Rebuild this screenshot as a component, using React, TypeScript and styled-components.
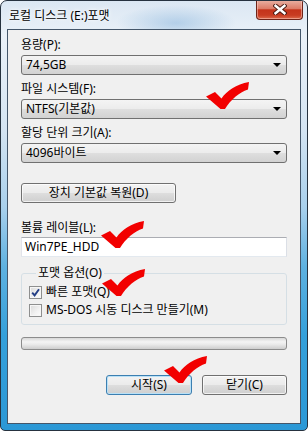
import styled, {createGlobalStyle} from 'styled-components';

const GlobalStyle = createGlobalStyle`
    body {
        margin: 0;
        background: #ffffff;
        font-family: 'Noto Sans', 'Noto Sans CJK KR', sans-serif;
    }
`;

const Window = styled.div`
    position: relative;
    width: 308px;
    height: 431px;
    box-sizing: border-box;
    display: flex;
    flex-direction: column;
    padding: 0 6px 6px 6px;
    border: 1px solid #26323f;
    border-radius: 7px 7px 5px 5px;
    background:
        radial-gradient(ellipse 60px 18px at 175px 22px, rgba(120, 170, 215, 0.45), transparent),
        linear-gradient(180deg, #dbe7f3 0%, #eaf1f8 8%, #d4e4f2 30%, #a9d0ec 48%, #5eb1e0 62%, #35a0da 78%, #2b98d6 100%);
    overflow: hidden;
    font-size: 12px;
    color: #000;
`;

const TitleBar = styled.div`
    height: 28px;
    display: flex;
    align-items: center;
    justify-content: space-between;
    padding-left: 2px;
`;

const Title = styled.span`
    line-height: 14px;
    margin-top: 1px;
    text-shadow: 0 0 6px #ffffff, 0 0 3px #ffffff;
`;

const CloseButton = styled.div`
    align-self: flex-start;
    width: 45px;
    height: 19px;
    margin-top: -1px;
    margin-right: -2px;
    display: flex;
    align-items: center;
    justify-content: center;
    border: 1px solid #6e2419;
    border-top: none;
    border-radius: 0 0 4px 4px;
    background: linear-gradient(180deg, #eab2a5 0%, #dc7c68 45%, #c4331b 52%, #c83c22 80%, #dc6a4c 100%);
    box-shadow: inset 0 0 0 1px rgba(255, 210, 200, 0.5);
`;

const Client = styled.div`
    flex: 1;
    display: flex;
    flex-direction: column;
    padding: 8px 13px 0 13px;
    border: 1px solid #44566a;
    background: #f0f0f0;
`;

const FieldLabel = styled.div<{$top?: number}>`
    line-height: 14px;
    height: 14px;
    margin-top: ${p => p.$top ?? 0}px;
    white-space: nowrap;
`;

const Combo = styled.div`
    height: 20px;
    box-sizing: border-box;
    margin-top: 3px;
    display: flex;
    align-items: center;
    justify-content: space-between;
    padding: 0 5px 0 4px;
    border: 1px solid #707070;
    border-radius: 3px;
    background: linear-gradient(180deg, #f4f4f4 0%, #ececec 48%, #dedede 52%, #d2d2d2 100%);
    line-height: 14px;
`;

const Arrow = styled.span`
    width: 0;
    height: 0;
    border-left: 4px solid transparent;
    border-right: 4px solid transparent;
    border-top: 4px solid #000;
`;

const Button = styled.div<{$default?: boolean; $width: number; $top?: number}>`
    width: ${p => p.$width}px;
    height: 20px;
    box-sizing: border-box;
    margin-top: ${p => p.$top ?? 0}px;
    display: flex;
    align-items: center;
    justify-content: center;
    border: 1px solid ${p => (p.$default ? '#3c7fb1' : '#707070')};
    border-radius: 3px;
    background: linear-gradient(180deg, #f3f3f3 0%, #ebebeb 48%, #dddddd 52%, #cfcfcf 100%);
    box-shadow: inset 0 0 0 1px ${p => (p.$default ? '#b9e1f7' : 'rgba(255, 255, 255, 0.7)')};
    line-height: 14px;
    white-space: nowrap;
`;

const TextBox = styled.div`
    height: 20px;
    box-sizing: border-box;
    margin-top: 2px;
    display: flex;
    align-items: center;
    padding-left: 3px;
    border: 1px solid #abadb3;
    border-left-color: #e2e3ea;
    border-right-color: #dbdfe6;
    border-bottom-color: #e3e9ef;
    background: #ffffff;
    line-height: 14px;
`;

const Group = styled.fieldset`
    margin: 9px 0 0 0;
    padding: 5px 7px 7px 7px;
    border: 1px solid #d5dfe5;
    border-radius: 3px;
    display: flex;
    flex-direction: column;
    gap: 4px;
    min-inline-size: 0;
`;

const Legend = styled.legend`
    margin-left: 7px;
    padding: 0 2px;
    line-height: 14px;
`;

const CheckRow = styled.label`
    display: flex;
    align-items: center;
    gap: 4px;
    height: 14px;
    line-height: 14px;
    white-space: nowrap;
`;

const Box = styled.span`
    width: 13px;
    height: 13px;
    box-sizing: border-box;
    display: flex;
    align-items: center;
    justify-content: center;
    border: 1px solid #8e8f8f;
    background: linear-gradient(135deg, #d9d9d9 0%, #f2f2f2 60%, #fcfcfc 100%);
    box-shadow: inset 0 0 0 1px #f6f6f6;
`;

const Progress = styled.div`
    height: 13px;
    box-sizing: border-box;
    margin-top: 12px;
    border: 1px solid #8c8c8c;
    border-radius: 3px;
    background: linear-gradient(180deg, #d8d8d8 0%, #f4f4f4 35%, #e9e9e9 60%, #cdcdcd 100%);
`;

const Actions = styled.div`
    margin-top: 25px;
    display: flex;
    justify-content: flex-end;
    gap: 10px;
`;

const Tick = styled.svg`
    position: absolute;
    width: 43px;
    height: 27px;
    pointer-events: none;
`;

const ticks = [
    {left: 205, top: 81},
    {left: 100, top: 220},
    {left: 101, top: 268},
    {left: 163, top: 355},
];

function CheckMark({checked}: {checked?: boolean}) {
    return (
        <Box>
            {checked && (
                <svg width="9" height="9" viewBox="0 0 9 9">
                    <path d="M1.2 4.6 L3.6 7.4 L8 1.2" fill="none" stroke="#253f86" strokeWidth="1.9" />
                </svg>
            )}
        </Box>
    );
}

export default function App() {
    return (
        <>
            <GlobalStyle />
            <Window>
                <TitleBar>
                    <Title>로컬 디스크 (E:)포맷</Title>
                    <CloseButton>
                        <svg width="14" height="11" viewBox="0 0 14 11">
                            <path d="M2.5 1.8 L11.5 9.2 M11.5 1.8 L2.5 9.2" stroke="#4a1a12" strokeWidth="4.4" strokeLinecap="square" />
                            <path d="M2.5 1.8 L11.5 9.2 M11.5 1.8 L2.5 9.2" stroke="#ffffff" strokeWidth="2.4" strokeLinecap="square" />
                        </svg>
                    </CloseButton>
                </TitleBar>
                <Client>
                    <FieldLabel>용량(P):</FieldLabel>
                    <Combo>
                        74,5GB
                        <Arrow />
                    </Combo>
                    <FieldLabel $top={7}>파일 시스템(F):</FieldLabel>
                    <Combo>
                        NTFS(기본값)
                        <Arrow />
                    </Combo>
                    <FieldLabel $top={7}>할당 단위 크기(A):</FieldLabel>
                    <Combo>
                        4096바이트
                        <Arrow />
                    </Combo>
                    <Button $width={155} $top={20}>
                        장치 기본값 복원(D)
                    </Button>
                    <FieldLabel $top={18}>볼륨 레이블(L):</FieldLabel>
                    <TextBox>Win7PE_HDD</TextBox>
                    <Group>
                        <Legend>포맷 옵션(O)</Legend>
                        <CheckRow>
                            <CheckMark checked />
                            빠른 포맷(Q)
                        </CheckRow>
                        <CheckRow>
                            <CheckMark />
                            MS-DOS 시동 디스크 만들기(M)
                        </CheckRow>
                    </Group>
                    <Progress />
                    <Actions>
                        <Button $default $width={86}>
                            시작(S)
                        </Button>
                        <Button $width={85}>닫기(C)</Button>
                    </Actions>
                </Client>
                {ticks.map((t, i) => (
                    <Tick key={i} viewBox="0 0 43 27" style={{left: t.left, top: t.top}}>
                        <path
                            d="M0 14.5 L9 10 L15.5 16.5 C21 8.5 30 2.5 43 0 L42 7.5 C33 10.5 25 17.5 19 27 L14.5 27 Z"
                            fill="#f20000"
                        />
                    </Tick>
                ))}
            </Window>
        </>
    );
}
